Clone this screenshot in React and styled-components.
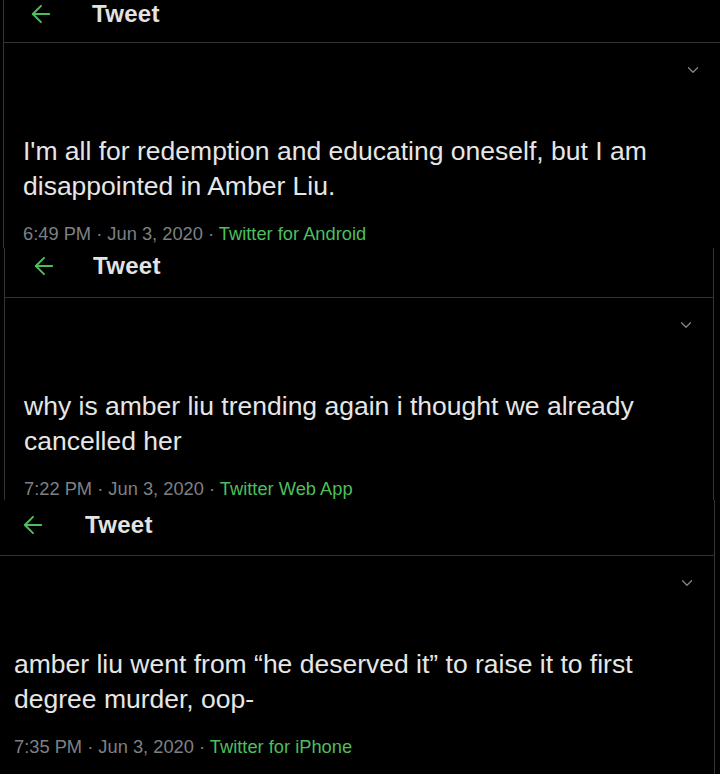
import React from "react";
import styled, { createGlobalStyle } from "styled-components";
import { ArrowLeft, ChevronDown } from "lucide-react";

const tweets = [
  {
    id: 1,
    text: "I'm all for redemption and educating oneself, but I am disappointed in Amber Liu.",
    time: "6:49 PM",
    date: "Jun 3, 2020",
    source: "Twitter for Android",
    frame: { left: 3, width: 717, height: 248, borderL: true, borderR: false },
    head: { height: 43, titleY: 11, arrowX: 23, titleGap: 37 },
    pad: 19,
  },
  {
    id: 2,
    text: "why is amber liu trending again i thought we already cancelled her",
    time: "7:22 PM",
    date: "Jun 3, 2020",
    source: "Twitter Web App",
    frame: { left: 4, width: 710, height: 252, borderL: true, borderR: true },
    head: { height: 50, titleY: 18, arrowX: 25, titleGap: 35 },
    pad: 19,
  },
  {
    id: 3,
    text: "amber liu went from \u201che deserved it\u201d to raise it to first degree murder, oop-",
    time: "7:35 PM",
    date: "Jun 3, 2020",
    source: "Twitter for iPhone",
    frame: { left: 0, width: 715, height: 274, borderL: false, borderR: true },
    head: { height: 56, titleY: 25, arrowX: 19, titleGap: 38 },
    pad: 14,
  },
];

export default function App() {
  return (
    <>
      <GlobalStyle />
      <Page>
        {tweets.map((t) => (
          <Panel
            key={t.id}
            $left={t.frame.left}
            $width={t.frame.width}
            $height={t.frame.height}
            $borderL={t.frame.borderL}
            $borderR={t.frame.borderR}
          >
            {/* Header */}
            <Header $height={t.head.height} $titleY={t.head.titleY}>
              <BackButton $x={t.head.arrowX}>
                <ArrowLeft size={28} strokeWidth={1.7} />
              </BackButton>
              <Title $gap={t.head.titleGap}>Tweet</Title>
            </Header>

            {/* Body */}
            <Body $pad={t.pad}>
              <CaretRow>
                <ChevronDown size={18} strokeWidth={1.6} />
              </CaretRow>
              <TweetText>{t.text}</TweetText>
              <Meta>
                {t.time} · {t.date} · <Source>{t.source}</Source>
              </Meta>
            </Body>
          </Panel>
        ))}
      </Page>
    </>
  );
}

const GlobalStyle = createGlobalStyle`
  html, body {
    margin: 0;
    padding: 0;
    background: #000;
  }
  body {
    font-family: "Liberation Sans", Arial, sans-serif;
    overflow: hidden;
  }
`;

const Page = styled.div`
  width: 720px;
  height: 774px;
  background: #000;
  display: flex;
  flex-direction: column;
  overflow: hidden;
`;

const Panel = styled.section`
  box-sizing: border-box;
  margin-left: ${(p) => p.$left}px;
  width: ${(p) => p.$width}px;
  height: ${(p) => p.$height}px;
  flex-shrink: 0;
  background: #000;
  border-left: ${(p) => (p.$borderL ? "1px solid #333538" : "none")};
  border-right: ${(p) => (p.$borderR ? "1px solid #333538" : "none")};
  display: flex;
  flex-direction: column;
`;

const Header = styled.header`
  box-sizing: border-box;
  height: ${(p) => p.$height}px;
  padding-top: ${(p) => p.$titleY - 14}px;
  border-bottom: 1px solid #2f3134;
  display: flex;
  align-items: flex-start;
  flex-shrink: 0;
`;

const BackButton = styled.div`
  width: 28px;
  height: 28px;
  margin-left: ${(p) => p.$x}px;
  display: flex;
  align-items: center;
  justify-content: center;
  color: #4cbf5c;
`;

const Title = styled.h2`
  margin: 0 0 0 ${(p) => p.$gap}px;
  font-size: 24px;
  line-height: 28px;
  font-weight: 700;
  color: #e3e3e3;
  letter-spacing: 0.3px;
`;

const Body = styled.div`
  padding: 0 30px 0 ${(p) => p.$pad}px;
  display: flex;
  flex-direction: column;
`;

const CaretRow = styled.div`
  height: 18px;
  margin-top: 18px;
  margin-right: -12px;
  display: flex;
  justify-content: flex-end;
  color: #85888c;
`;

const TweetText = styled.p`
  margin: 55px 0 0;
  font-size: 26.5px;
  line-height: 35px;
  color: #e6e6e6;
  font-weight: 400;
`;

const Meta = styled.div`
  margin-top: 19px;
  font-size: 18.3px;
  line-height: 22px;
  color: #7d8084;
`;

const Source = styled.span`
  color: #4cbf5c;
`;
